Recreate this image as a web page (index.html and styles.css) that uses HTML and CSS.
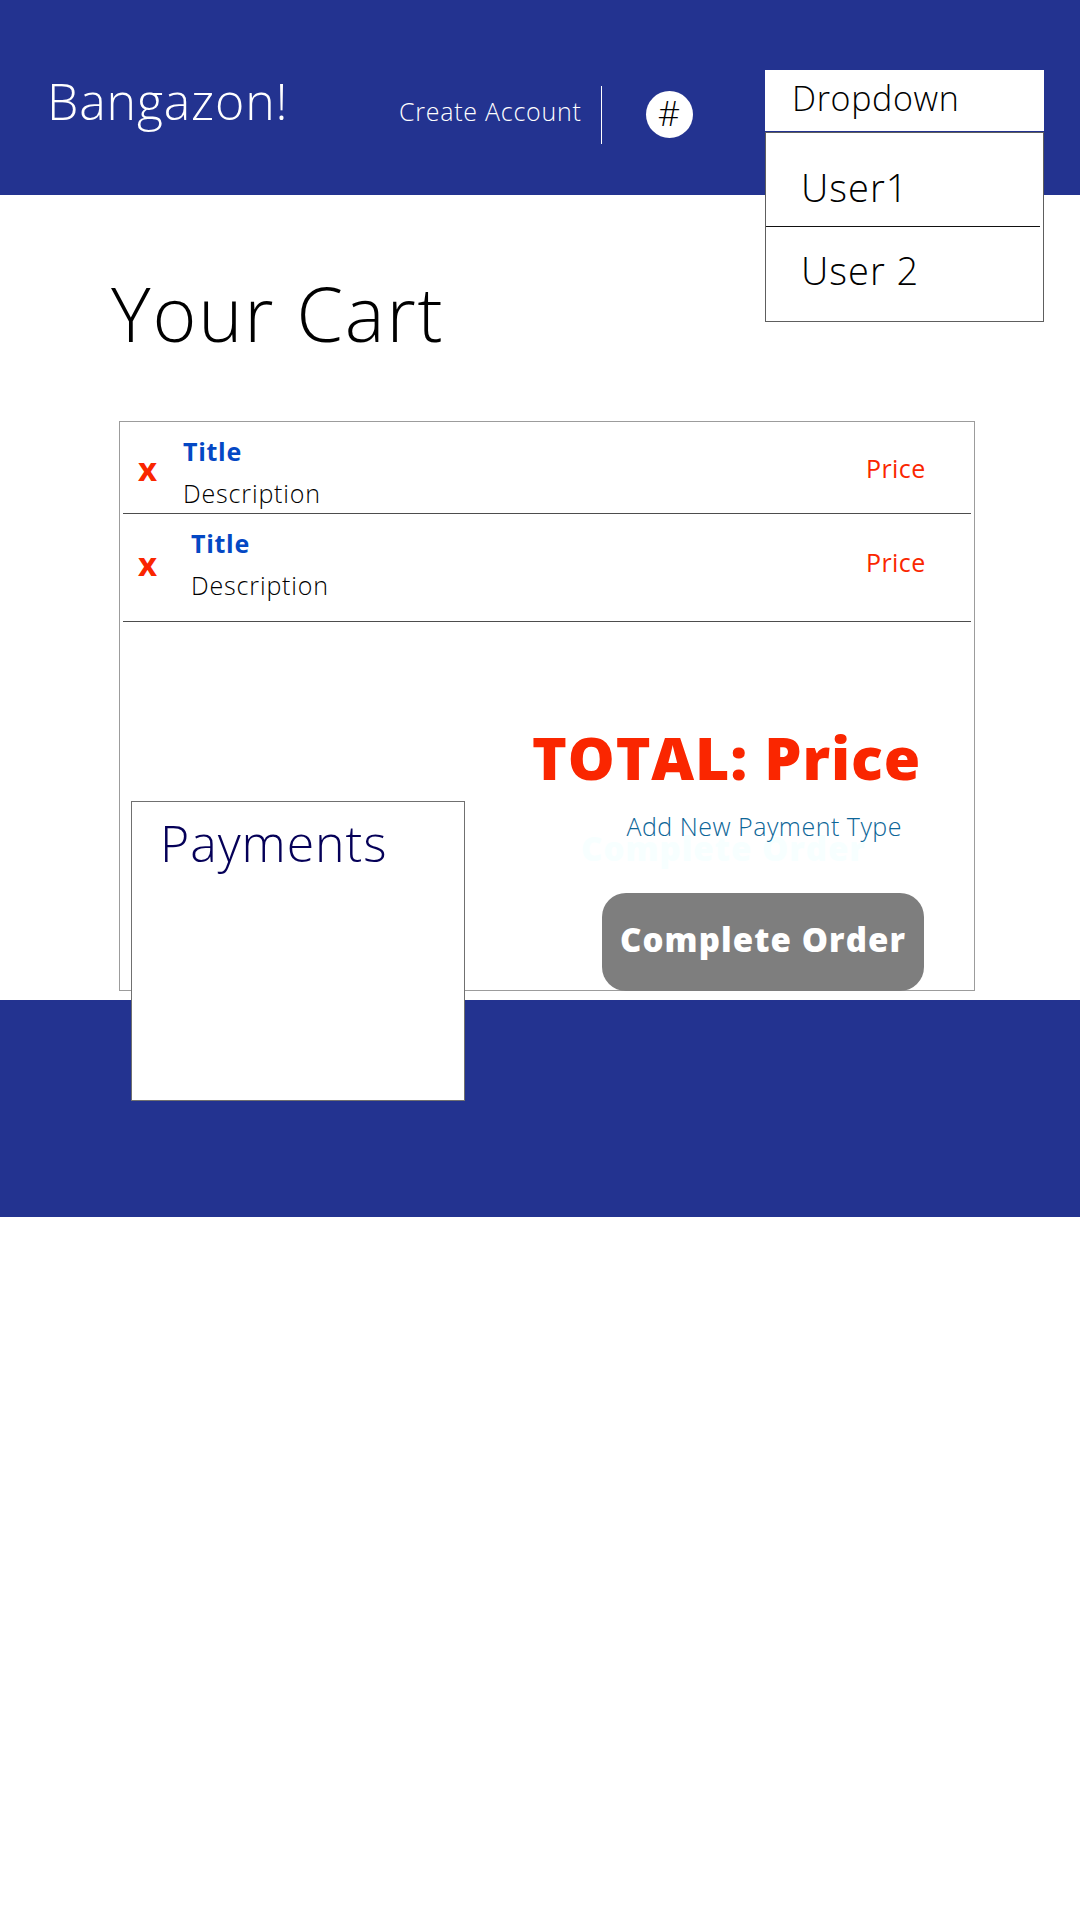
FILE: index.html
```html
<!DOCTYPE html>
<html lang="en">
<head>
<meta charset="utf-8">
<title>Bangazon - Your Cart</title>
<link rel="stylesheet" href="styles.css">
</head>
<body>
<header class="header">
  <div class="brand">Bangazon!</div>
  <nav class="nav"><a class="create">Create Account</a><span class="badge">#</span></nav>
  <div class="dropdown">
    <div class="dropdown-head">Dropdown</div>
    <div class="options">
      <div class="option first">User1</div>
      <div class="option">User 2</div>
    </div>
  </div>
</header>
<main class="main">
  <h1 class="heading">Your Cart</h1>
  <section class="cart">
    <div class="item">
      <span class="remove">x</span>
      <div class="info"><div class="title">Title</div><div class="desc">Description</div></div>
      <span class="price">Price</span>
    </div>
    <div class="item second">
      <span class="remove">x</span>
      <div class="info"><div class="title">Title</div><div class="desc">Description</div></div>
      <span class="price">Price</span>
    </div>
    <div class="summary">
      <div class="total">TOTAL: Price</div>
      <a class="add">Add New Payment Type</a>
      <button class="complete">Complete Order</button>
    </div>
    <span class="ghost">Complete Order</span>
    <div class="payments">Payments</div>
  </section>
</main>
<footer class="footer"></footer>
</body>
</html>
```

FILE: styles.css
```css
* { box-sizing: border-box; }
body { margin: 0; background: #fff; color: #000; font-family: "Open Sans", sans-serif; font-weight: 300; letter-spacing: 1px; }
.header { position: relative; height: 195px; background: #233390; display: flex; color: #fff; }
.brand { width: 399px; padding: 66px 0 0 47px; font-size: 50px; line-height: 70px; letter-spacing: 0.85px; white-space: nowrap; }
.nav { display: flex; align-items: flex-start; padding-top: 86px; }
.create { width: 203px; height: 58px; border-right: 1px solid #fff; font-size: 25px; line-height: 50px; letter-spacing: 0.75px; white-space: nowrap; }
.badge { width: 47px; height: 47px; margin: 5px 0 0 44px; border-radius: 50%; background: #fff; color: #000; font-size: 34px; line-height: 44px; text-align: center; }

.dropdown { position: absolute; z-index: 2; left: 765px; top: 70px; display: flex; flex-direction: column; gap: 1px; width: 279px; color: #000; }
.dropdown-head { height: 61px; padding-left: 27px; background: #fff; font-size: 34px; line-height: 56px; letter-spacing: 0.65px; }
.options { height: 190px; background: #fff; border: 1px solid #5e5e5e; }
.option { height: 94px; padding-left: 35px; font-size: 38px; line-height: 87px; }
.first { width: 274px; border-bottom: 1px solid #111; line-height: 109px; }

.main { height: 805px; padding: 66px 0 0 119px; }
.heading { margin: 0 0 56px -8px; font-size: 75px; font-weight: 300; line-height: 104px; letter-spacing: 1.8px; }
.cart { position: relative; isolation: isolate; width: 856px; height: 570px; padding: 0 3px; border: 1px solid #9c9c9c; }
.item { display: flex; height: 92px; border-bottom: 1px solid #4d4d4d; }
.remove { width: 44px; padding: 24px 0 0 15px; color: #fa2600; font-size: 33px; font-weight: 700; line-height: 46px; }
.info { width: 699px; padding-top: 12px; padding-left: 16px; font-size: 25px; line-height: 35px; letter-spacing: 0.7px; }
.title { margin-bottom: 7px; color: #0448c4; font-weight: 700; }
.desc { letter-spacing: 0.85px; }
.price { padding-top: 29px; color: #fa2600; font-size: 25px; font-weight: 400; line-height: 35px; letter-spacing: 0.4px; }
.second { height: 108px; }
.second .remove { padding-top: 27px; }
.second .info { padding-left: 24px; }
.second .price { padding-top: 31px; }

.summary { display: flex; flex-direction: column; align-items: flex-end; padding: 94px 47px 0 0; }
.total { margin-right: 3px; color: #fa2600; font-size: 59px; font-weight: 800; line-height: 82px; letter-spacing: 0.85px; }
.add { margin: 11px 22px 0 0; color: #0d6698; font-size: 25px; line-height: 35px; letter-spacing: 0.5px; }
.complete { width: 322px; height: 98px; margin-top: 49px; padding: 0 0 5px; border: 0; border-radius: 24px; background: #7e7e7e; color: #fff; font: 800 33px "Open Sans", sans-serif; letter-spacing: 1.1px; }
.ghost { position: absolute; z-index: -1; left: 461px; top: 404px; color: #f7ffff; font-size: 33px; font-weight: 800; line-height: 46px; letter-spacing: 1px; white-space: nowrap; }
.payments { position: absolute; left: 11px; top: 379px; width: 334px; height: 300px; padding: 6px 0 0 28px; background: #fff; border: 1px solid #707070; color: #050058; font-size: 50px; line-height: 70px; letter-spacing: 0.95px; }
.footer { height: 217px; background: #233390; }
```
